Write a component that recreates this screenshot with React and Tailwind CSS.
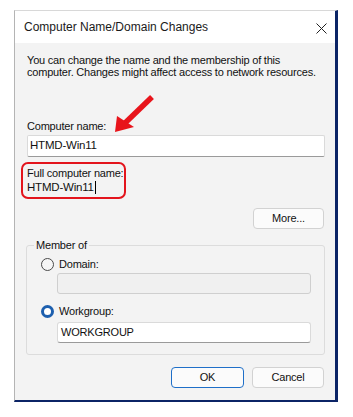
import React from "react";

function Radio({ checked }) {
  if (checked) {
    return (
      <span className="w-[13px] h-[13px] rounded-full border-[3px] border-[#1d5fae] bg-white shrink-0" />
    );
  }
  return (
    <span className="w-[13px] h-[13px] rounded-full border border-[#4a4a4a] bg-[#f6f6f6] shrink-0" />
  );
}

export default function App() {
  return (
    <div
      className="relative w-[353px] h-[417px] bg-white overflow-hidden pt-[10px] pl-[14px] text-[#111] whitespace-nowrap"
      style={{ fontFamily: '"Liberation Sans", Arial, sans-serif' }}
    >
      <div className="w-[324px] h-[392px] flex flex-col border-l border-l-[#b4b4b4] border-t border-t-[#d8d8d8] border-r-[3px] border-r-[#0b2466] border-b-[2px] border-b-[#0b2466]">
        {/* Title bar */}
        <div className="h-[32px] bg-white flex items-center justify-between pl-[9px] pr-[8px] shrink-0">
          <span className="text-[12px] leading-[14px] text-[#1a1a1a]">Computer Name/Domain Changes</span>
          <svg width="11" height="11" viewBox="0 0 11 11" className="mt-[2px]">
            <path d="M0.5 0.5 L10.5 10.5 M10.5 0.5 L0.5 10.5" stroke="#222" strokeWidth="1" fill="none" />
          </svg>
        </div>

        {/* Body */}
        <div className="flex-1 bg-[#f3f3f3] pl-[12px] pr-[10px] pt-[11px] flex flex-col tracking-[-0.2px]">
          <p className="text-[11px] leading-[12px]">
            You can change the name and the membership of this
            <br />
            computer. Changes might affect access to network resources.
          </p>

          <div className="mt-[41px] text-[11px] leading-[14px]">Computer name:</div>
          <div className="mt-[2px] h-[22px] w-[298px] bg-white border border-[#dadada] border-b-[#9a9a9a] rounded-[2px] flex items-center pl-[2px] text-[11.5px]">
            HTMD-Win11
          </div>

          <div className="mt-[5px] -ml-[6px] w-[105px] h-[37px] border-2 border-[#e3141c] rounded-[7px] pl-[4px] pt-[2px] text-[11px] leading-[14px]">
            <div>Full computer name:</div>
            <div className="flex items-center text-[11.5px]">
              HTMD-Win11
              <span className="inline-block w-px h-[13px] bg-black ml-[1px]" />
            </div>
          </div>

          <div className="mt-[9px] self-end mr-[1px] w-[71px] h-[21px] bg-[#fbfbfb] border border-[#d2d2d2] rounded-[4px] flex items-center justify-center text-[11px]">
            More...
          </div>

          <fieldset className="mt-[9px] -ml-[1px] w-[299px] border border-[#dcdcdc] rounded-[3px] px-0 pb-[11px]">
            <legend className="ml-[7px] px-[2px] text-[11px] leading-[14px]">Member of</legend>
            <div className="mt-[5px] ml-[14px] flex items-center gap-[5px] h-[14px] text-[11px]">
              <Radio />
              <span>Domain:</span>
            </div>
            <div className="mt-[2px] ml-[30px] w-[254px] h-[21px] bg-[#f0f0f0] border border-[#cfcfcf] rounded-[3px]" />
            <div className="mt-[10px] ml-[14px] flex items-center gap-[5px] h-[14px] text-[11px]">
              <Radio checked />
              <span>Workgroup:</span>
            </div>
            <div className="mt-[4px] ml-[30px] w-[254px] h-[21px] bg-white border border-[#dadada] border-b-[#9a9a9a] rounded-[3px] flex items-center pl-[3px] text-[11px]">
              WORKGROUP
            </div>
          </fieldset>

          <div className="mt-[12px] mr-[1px] flex justify-end gap-[8px]">
            <div className="w-[73px] h-[21px] bg-[#fbfbfb] border border-[#1f6fc8] rounded-[4px] flex items-center justify-center text-[11px]">
              OK
            </div>
            <div className="w-[72px] h-[21px] bg-[#fbfbfb] border border-[#d2d2d2] rounded-[4px] flex items-center justify-center text-[11px]">
              Cancel
            </div>
          </div>
        </div>
      </div>

      {/* Red annotation arrow */}
      <svg className="absolute left-0 top-0 pointer-events-none" width="353" height="417" viewBox="0 0 353 417">
        <line x1="152" y1="97" x2="124" y2="124" stroke="#e8141b" strokeWidth="5.5" strokeLinecap="butt" />
        <polygon points="115,132 117,116 134,127" fill="#e8141b" />
      </svg>
    </div>
  );
}
